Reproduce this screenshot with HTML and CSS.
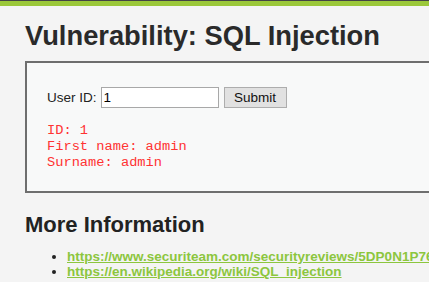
FILE: index.html
```html
<!DOCTYPE html>
<html lang="en">
<head>
    <meta charset="UTF-8">
    <title>Vulnerability: SQL Injection</title>
    <link rel="stylesheet" href="styles.css">
</head>
<body>
    <div class="header-bar"></div>
    <div class="main-body">
        <h1>Vulnerability: SQL Injection</h1>

        <div class="vulnerable-code-area">
            <form class="id-form" action="#" method="GET">
                <label for="userId">User ID:</label>
                <input type="text" id="userId" name="id" value="1">
                <button type="button">Submit</button>
            </form>
            <pre class="result">ID: 1
First name: admin
Surname: admin</pre>
        </div>

        <h2>More Information</h2>
        <ul class="links">
            <li><a href="#">https://www.securiteam.com/securityreviews/5DP0N1P76E.html</a></li>
            <li><a href="#">https://en.wikipedia.org/wiki/SQL_injection</a></li>
        </ul>
    </div>
</body>
</html>
```

FILE: styles.css
```css
html {
    overflow: hidden;
}
body {
    margin: 0;
    background-color: #f4f4f4;
    font-family: "Liberation Sans", Arial, sans-serif;
    font-size: 13.5px;
    color: #222;
}
.header-bar {
    height: 5px;
    border-top: 1px solid #444;
    background-color: #9bc83a;
}
.main-body {
    width: 700px;
    padding-left: 25px;
}
h1 {
    font-size: 27.3px;
    line-height: 31px;
    margin: 14px 0 10px;
    color: #2a2a2a;
}
.vulnerable-code-area {
    background-color: #f8f9f9;
    border: 2px solid #6e6e6e;
    padding: 24px 20px 20px;
}
.id-form {
    display: flex;
    align-items: center;
    height: 21px;
}
.id-form label {
    margin-right: 4px;
}
.id-form input {
    width: 118px;
    height: 21px;
    box-sizing: border-box;
    border: 1px solid #a8a8a8;
    padding: 1px 2px;
    font-family: "Liberation Sans", Arial, sans-serif;
    font-size: 13.5px;
    background-color: #fff;
    color: #000;
}
.id-form button {
    margin-left: 5px;
    width: 63px;
    height: 21px;
    box-sizing: border-box;
    background-color: #e1e1e1;
    border: 1px solid #adadad;
    font-family: "Liberation Sans", Arial, sans-serif;
    font-size: 13.5px;
    color: #111;
    padding: 0;
}
.result {
    margin: 15px 0 0;
    font-family: "Liberation Mono", "Courier New", monospace;
    font-size: 13.7px;
    line-height: 16px;
    color: #ff3333;
}
h2 {
    font-size: 22px;
    line-height: 25px;
    margin: 19px 0 12px;
    color: #222;
}
.links {
    margin: 0;
    padding-left: 42px;
    line-height: 15px;
}
.links a {
    color: #8cc63e;
    font-weight: bold;
}
```
